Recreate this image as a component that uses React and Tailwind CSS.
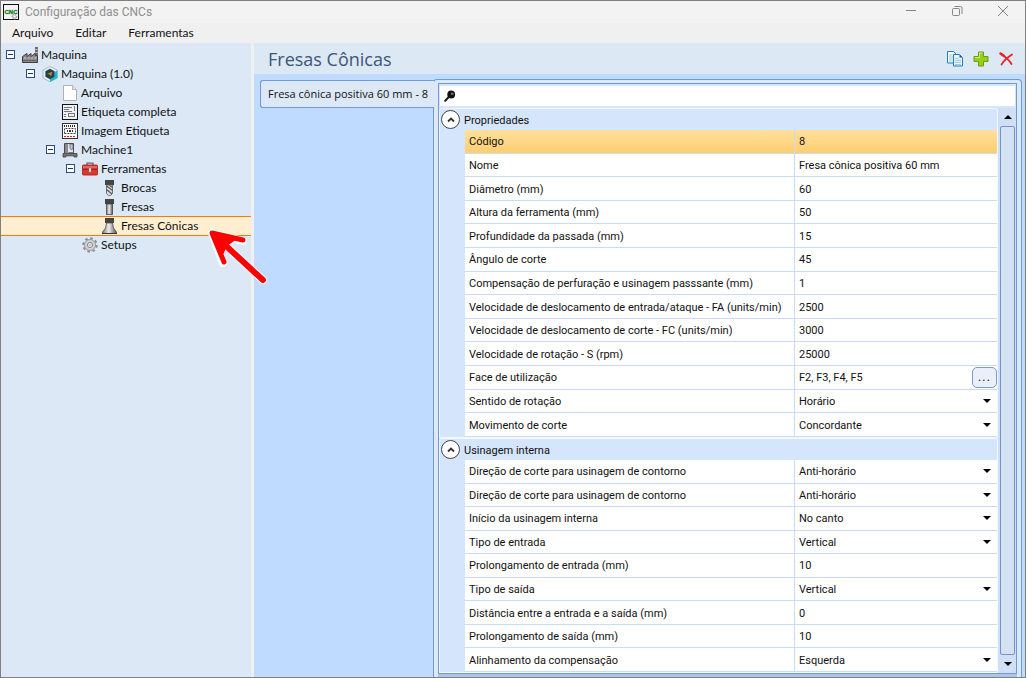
import { useState } from 'react';

const AppIcon = () => (
  <svg className="w-4 h-4 shrink-0" viewBox="0 0 16 16">
    <rect x=".5" y=".5" width="15" height="15" fill="#f4f4f4" stroke="#111" />
    <text x="8" y="10" textAnchor="middle" fontFamily="Liberation Sans" fontWeight="bold" fontSize="6" stroke="#157a1c" strokeWidth=".3" fill="#157a1c">CNC</text>
    <circle cx="11.5" cy="12.5" r="2" fill="none" stroke="#aaa" strokeWidth="1.8" strokeDasharray="1.2 .6" />
  </svg>
);

const FactoryIcon = () => (
  <svg className="w-4 h-4" viewBox="0 0 16 16">
    <path d="M13.500-.5h2v9h-2z" fill="#ccc" stroke="#666" strokeWidth=".6" />
    <path d="M13.500 1h2M13.500 4h2M13.500 7h2" stroke="#444" strokeWidth="1.300" />
    <path d="M.5 15.500V9.500L5 6.500v3l4-3v3l4-3 .5 2h2v7z" fill="#8b8b8b" stroke="#3c3c3c" />
    <path d="M2 11h2M5.500 11h2M9 11h2M12.500 11h2" stroke="#ccc" strokeWidth="1" />
    <path d="M1 13.500h14" stroke="#666" />
  </svg>
);

const CubeIcon = () => (
  <svg className="w-4 h-4" viewBox="0 0 16 16">
    <path d="M8 .5 15 4v8l-7 3.800L1 12V4z" fill="#e8eef2" stroke="#9fb0bb" strokeWidth=".8" />
    <path d="M15.500 4.500V12L8 16v-3l4.500-2.500V6z" fill="#1bbccb" />
    <path d="M8 2.800 12.600 5.300v5.400L8 13.300 3.400 10.700V5.300z" fill="#1c4450" />
    <path d="m5 7.800 5.500-2L9 10.500 8 8.800z" fill="#e07b2c" />
  </svg>
);

const FileIcon = () => (
  <svg className="w-4 h-4" viewBox="0 0 16 16">
    <path d="M1.500.5h9l4 4v11h-13z" fill="#fdfdfd" stroke="#b0b0b0" />
    <path d="M10.500.5v4h4" fill="#e4e4e4" stroke="#bbb" />
  </svg>
);

const LabelIcon = () => (
  <svg className="w-4 h-4" viewBox="0 0 16 16">
    <rect x=".5" y=".5" width="15" height="15" fill="#eef0f2" stroke="#111" />
    <path d="M2 3.500h8M2 5.500h5M2 7.500h8M2 10.500h2M2 12.500h2M12.500 2v5" stroke="#777" />
    <rect x="6.500" y="9.500" width="6" height="3" fill="none" stroke="#777" />
  </svg>
);

const ImageLabelIcon = () => (
  <svg className="w-4 h-4" viewBox="0 0 16 16">
    <rect x=".5" y=".5" width="15" height="15" fill="#fff" stroke="#333" />
    <path d="M2 3h12" stroke="#333" strokeWidth="2" strokeDasharray="1 1" />
    <path d="M2.500 10.500v-5h11v5z" fill="none" stroke="#444" strokeDasharray="2 1" />
    <path d="M5 8h1M7 8h2M10 8h1" stroke="#333" strokeWidth="2" />
    <path d="M2 13.500h12" stroke="#e01818" strokeDasharray="2 1" />
  </svg>
);

const MachineIcon = () => (
  <svg className="w-4 h-4" viewBox="0 0 16 16">
    <path d="M2.500 11V1.500h9v10" fill="none" stroke="#4a4a4a" />
    <path d="M3 2h3v9H3z" fill="#8a8a8a" />
    <path d="M8 2h3v4L9.500 8 8 6z" fill="#c9c9c9" stroke="#555" strokeWidth=".7" />
    <path d="M6.500 10.500h5" stroke="#777" />
    <path d="M1 11.500h14v3.500h-3v-1.200H4V15H1z" fill="#777" stroke="#3a3a3a" strokeWidth=".8" />
  </svg>
);

const ToolboxIcon = () => (
  <svg className="w-4 h-4" viewBox="0 0 16 16">
    <path d="M5 4.500V2.200h6v2.300" fill="none" stroke="#666" strokeWidth="1.300" />
    <rect x=".5" y="4" width="15" height="10" rx="1" fill="#d93a34" stroke="#a31713" strokeWidth=".8" />
    <path d="M1 5h14v2.500H1z" fill="#e8655d" />
    <path d="M1 8.200h14" stroke="#9d1512" />
    <rect x="7" y="7" width="2" height="4" fill="#eee" stroke="#888" strokeWidth=".4" />
  </svg>
);

const DrillIcon = () => (
  <svg className="w-4 h-4" viewBox="0 0 16 16">
    <path d="M3 0h9v5H3z" fill="#444" />
    <path d="M4.500 5h6v8.500l-2 2h-2l-2-2z" fill="#ddd" stroke="#555" strokeWidth=".8" />
    <path d="m4.500 6 6 4.500M4.500 9.500l5.500 4.500M7.500 5.500l3 2" stroke="#555" strokeWidth="1.200" />
  </svg>
);

const MillIcon = () => (
  <svg className="w-4 h-4" viewBox="0 0 16 16">
    <defs>
      <linearGradient id="steel">
        <stop offset="0" stopColor="#777" />
        <stop offset=".45" stopColor="#eee" />
        <stop offset="1" stopColor="#555" />
      </linearGradient>
    </defs>
    <path d="M3 0h9v5H3z" fill="#444" />
    <path d="M4.500 5h6v10.500h-6z" fill="url(#steel)" stroke="#444" strokeWidth=".8" />
  </svg>
);

const ConeIcon = () => (
  <svg className="w-4 h-4" viewBox="0 0 16 16">
    <path d="M3 0h9v5H3z" fill="#444" />
    <path d="M4.500 5h6l1 5 3 4v1.500H.5V14l3-4z" fill="url(#steel)" stroke="#444" strokeWidth=".7" />
    <path d="M0 15.500h15" stroke="#333" />
  </svg>
);

const GearIcon = () => (
  <svg className="w-4 h-4" viewBox="0 0 16 16">
    <circle cx="8" cy="8" r="6.700" fill="none" stroke="#8c8c8c" strokeWidth="2" strokeDasharray="2.600 2.662" />
    <circle cx="8" cy="8" r="5.500" fill="#d2d2d2" stroke="#8c8c8c" strokeWidth=".8" />
    <circle cx="8" cy="8" r="2.600" fill="#dce8f6" stroke="#8c8c8c" />
    <circle cx="8" cy="8" r="1" fill="#b8b8b8" />
  </svg>
);

const CopyIcon = () => (
  <svg className="w-4 h-4" viewBox="0 0 16 16">
    <path d="M.5.5h6l3 3v8.500h-9z" fill="#f4fbff" stroke="#1f7fb8" />
    <path d="M2 4h3.500M2 6h5M2 8h5M2 10h5" stroke="#9fcbe4" />
    <path d="M6.500 3.500h6l3 3v8.500h-9z" fill="#e2f3fb" stroke="#1f7fb8" />
    <path d="M12.500 3.500v3h3z" fill="#1a5d8a" />
    <path d="M8 7.500h3.500M8 9.500h6M8 11.500h6M8 13.500h6" stroke="#9fcbe4" />
  </svg>
);

const AddIcon = () => (
  <svg className="w-4 h-4" viewBox="0 0 16 16">
    <path d="M5.500 1h5v4.500H15v5h-4.500V15h-5v-4.500H1v-5h4.500z" fill="#93cf1c" stroke="#6a9b10" />
    <path d="M6.500 2h3M2 6.500h4.500V2" fill="none" stroke="#cdee7d" />
  </svg>
);

const DeleteIcon = () => (
  <svg className="w-4 h-4" viewBox="0 0 16 16">
    <path d="M2 3c4 2.500 8 6 10.500 10M13 3.500C9 6 5 9.500 2.500 13.500" fill="none" stroke="#ee2222" strokeWidth="1.800" strokeLinecap="round" />
    <path d="M1.500 2.500 5 5" stroke="#ee2222" strokeWidth="2.600" strokeLinecap="round" />
  </svg>
);

const SearchIcon = () => (
  <svg className="w-3 h-3 shrink-0" viewBox="0 0 12 12">
    <path d="m1.200 10.800 3.600-4" stroke="#111" strokeWidth="2" strokeLinecap="round" />
    <circle cx="7.200" cy="4.500" r="3.900" fill="#111" />
    <circle cx="8.200" cy="3.800" r="1.300" fill="#777" />
  </svg>
);

const Caret = ({ up }) => (
  <svg className="w-2 h-1 pointer-events-none" viewBox="0 0 8 4">
    <path d={up ? 'M0 4h8L4 0z' : 'M0 0h8L4 4z'} fill="#000" />
  </svg>
);

const tree = [
  { name: 'Maquina', level: 0, icon: FactoryIcon, open: true },
  { name: 'Maquina (1.0)', level: 1, icon: CubeIcon, open: true },
  { name: 'Arquivo', level: 2, icon: FileIcon },
  { name: 'Etiqueta completa', level: 2, icon: LabelIcon },
  { name: 'Imagem Etiqueta', level: 2, icon: ImageLabelIcon },
  { name: 'Machine1', level: 2, icon: MachineIcon, open: true },
  { name: 'Ferramentas', level: 3, icon: ToolboxIcon, open: true },
  { name: 'Brocas', level: 4, icon: DrillIcon },
  { name: 'Fresas', level: 4, icon: MillIcon },
  { name: 'Fresas Cônicas', level: 4, icon: ConeIcon },
  { name: 'Setups', level: 3, icon: GearIcon },
];

const indent = ['pl-[5px]', 'pl-[25px]', 'pl-[45px]', 'pl-[65px]', 'pl-[85px]'];

const properties = [
  { name: 'Código', value: '8' },
  { name: 'Nome', value: 'Fresa cônica positiva 60 mm' },
  { name: 'Diâmetro (mm)', value: '60' },
  { name: 'Altura da ferramenta (mm)', value: '50' },
  { name: 'Profundidade da passada (mm)', value: '15' },
  { name: 'Ângulo de corte', value: '45' },
  { name: 'Compensação de perfuração e usinagem passsante (mm)', value: '1' },
  { name: 'Velocidade de deslocamento de entrada/ataque - FA (units/min)', value: '2500' },
  { name: 'Velocidade de deslocamento de corte - FC (units/min)', value: '3000' },
  { name: 'Velocidade de rotação - S (rpm)', value: '25000' },
  { name: 'Face de utilização', value: 'F2, F3, F4, F5', type: 'dialog' },
  { name: 'Sentido de rotação', value: 'Horário', type: 'select' },
  { name: 'Movimento de corte', value: 'Concordante', type: 'select' },
];

const internal = [
  { name: 'Direção de corte para usinagem de contorno', value: 'Anti-horário', type: 'select' },
  { name: 'Direção de corte para usinagem de contorno', value: 'Anti-horário', type: 'select' },
  { name: 'Início da usinagem interna', value: 'No canto', type: 'select' },
  { name: 'Tipo de entrada', value: 'Vertical', type: 'select' },
  { name: 'Prolongamento de entrada (mm)', value: '10' },
  { name: 'Tipo de saída', value: 'Vertical', type: 'select' },
  { name: 'Distância entre a entrada e a saída (mm)', value: '0' },
  { name: 'Prolongamento de saída (mm)', value: '10' },
  { name: 'Alinhamento da compensação', value: 'Esquerda', type: 'select' },
];

const TitleBar = () => (
  <header className="h-[22px] shrink-0 flex items-center bg-[#f3f3f3] pl-0.5">
    <AppIcon />
    <h1 className="ml-1.5 flex-1 text-[12px] text-[#8f8f8f]">Configuração das CNCs</h1>
    <div className="flex self-start text-[#858585]">
      <button aria-label="Minimizar" className="w-11 h-5 flex items-center justify-center">
        <svg className="w-3 h-3" viewBox="0 0 12 12"><path d="M1 5.500h10" stroke="currentColor" /></svg>
      </button>
      <button aria-label="Restaurar" className="w-12 h-5 flex items-center justify-center">
        <svg className="w-3 h-3" viewBox="0 0 12 12" fill="none" stroke="currentColor">
          <rect x="1.500" y="3.500" width="7" height="7" rx="1" />
          <path d="M3.500 1.500h6a1.500 1.500 0 0 1 1.500 1.500v6" />
        </svg>
      </button>
      <button aria-label="Fechar" className="w-11 h-5 flex items-center justify-center">
        <svg className="w-3 h-3" viewBox="0 0 12 12"><path d="m1 1 10 10M11 1 1 11" stroke="currentColor" /></svg>
      </button>
    </div>
  </header>
);

const MenuBar = () => (
  <nav className="h-5 shrink-0 flex items-center gap-[22px] px-[11px] bg-[#f0f0f0] font-['Lato',sans-serif] text-[12px]">
    <button>Arquivo</button>
    <button>Editar</button>
    <button>Ferramentas</button>
  </nav>
);

const Tree = ({ selected, onSelect }) => (
  <aside className="relative w-[250px] shrink-0 pt-0.5 bg-[#dce8f6] font-['Lato',sans-serif] text-[12px]">
    <ul>
      {tree.map((item) => (
        <li
          key={item.name + item.level}
          className={`flex items-center whitespace-nowrap ${indent[item.level]} ${
            item.name === selected ? 'h-5 -mb-px border-y border-[#f57c00] bg-[#ffefd0]' : 'h-[19px]'
          }`}
        >
          <span className="w-[9px] mr-[7px] shrink-0">
            {item.open && (
              <button aria-label={`Recolher ${item.name}`} className="flex size-[9px] items-center justify-center border border-[#2b4a7d] bg-white">
                <span className="w-[5px] h-px bg-[#1d3360]" />
              </button>
            )}
          </span>
          <button className="flex items-center gap-[3px]" onClick={() => onSelect(item.name)}>
            <item.icon />
            {item.name}
          </button>
        </li>
      ))}
    </ul>
    {/* Pointer to the selected item */}
    <svg className="absolute z-20 left-[206px] top-[184px] w-[64px] h-[60px] pointer-events-none" viewBox="0 0 64 60" fill="none" strokeLinecap="round" strokeLinejoin="round">
      <path d="M56 53 20 20M5 6l31 8M5 6l11 30" stroke="#fff" strokeWidth="8" />
      <path d="M18 18 56 53" stroke="#f00" strokeWidth="6" />
      <path d="M36 13 5 6l12 29" stroke="#f00" strokeWidth="5" />
      <path d="M5 6 30 12 20 19 15 30z" fill="#f00" />
    </svg>
  </aside>
);

const PropertyRow = ({ id, item, active }) => (
  <tr className={active ? 'bg-linear-to-b from-[#ffe09c] to-[#ffcd6e]' : 'bg-white'}>
    <th scope="row" className="w-[329px] p-0 pt-0.5 pl-1 text-left font-normal border-b border-[#c9dcf5] whitespace-nowrap">
      <label htmlFor={id}>{item.name}</label>
    </th>
    <td className="p-0 border-b border-l border-[#c9dcf5]">
      <div className="relative flex items-center h-[21px]">
        {item.type === 'select' ? (
          <>
            <select id={id} defaultValue={item.value} className="w-full pt-0.5 pl-1 pr-4 appearance-none bg-transparent outline-none">
              <option>{item.value}</option>
            </select>
            <span className="absolute right-1.5 inset-y-0 flex items-center pointer-events-none">
              <Caret />
            </span>
          </>
        ) : (
          <input id={id} defaultValue={item.value} className="w-full min-w-0 pt-0.5 pl-1 bg-transparent outline-none" />
        )}
        {item.type === 'dialog' && (
          <button aria-label={`Editar ${item.name}`} className="w-[25px] h-[21px] shrink-0 rounded-[5px] border border-[#7a9acb] bg-[#e9f0fa] text-[12px] leading-4 tracking-widest">
            ...
          </button>
        )}
      </div>
    </td>
  </tr>
);

const PropertyGroup = ({ title, prefix, items, tableClass, active }) => (
  <section className="pl-[25px] border border-[#f4f8fe] rounded-t-[3px] bg-[#d5e5fb]">
    <h3 className="h-[21px] -ml-6 flex items-center gap-1">
      <button aria-label={`Recolher ${title}`} className="relative flex size-[19px] shrink-0 items-center justify-center rounded-full border border-[#444] bg-white">
        <svg className="w-2 h-2" viewBox="0 0 8 8"><path d="M1 5.500 4 2.500l3 3" fill="none" stroke="#333" strokeWidth="1.800" /></svg>
      </button>
      <span className="pt-0.5">{title}</span>
    </h3>
    <table className={`w-full table-fixed border-separate border-spacing-0 ${tableClass}`}>
      <tbody>
        {items.map((item, i) => (
          <PropertyRow key={i} id={`${prefix}-${i}`} item={item} active={active === i} />
        ))}
      </tbody>
    </table>
  </section>
);

const PropertyGrid = () => (
  <div className="flex-1 min-w-0 mt-[5px] mr-[3px] flex flex-col border border-[#6e9ad8] border-b-0 rounded-t-[4px] bg-[#dce8f6] px-1 pt-[3px]">
    <div className="flex-1 flex flex-col border border-[#6e9ad8] bg-[#d5e5fb]">
      <label className="m-0.5 mx-px h-5 flex items-center gap-1 bg-white px-1">
        <SearchIcon />
        <input aria-label="Pesquisar" className="flex-1 min-w-0 bg-transparent outline-none" />
      </label>
      <div className="flex-1 flex">
        <div className="flex-1 min-w-0">
          <PropertyGroup title="Propriedades" prefix="prop" items={properties} tableClass="h-[307px]" active={0} />
          <PropertyGroup title="Usinagem interna" prefix="int" items={internal} tableClass="h-[212px]" />
        </div>
        <div className="w-[18px] shrink-0 flex flex-col pl-0.5 pr-px bg-[#cfdff5]">
          <button aria-label="Rolar para cima" className="h-[18px] flex items-center justify-center"><Caret up /></button>
          <div className="flex-1 rounded-[2px] border border-[#7593c9] bg-[#d3e1f3]" />
          <button aria-label="Rolar para baixo" className="h-[18px] flex items-center justify-center"><Caret /></button>
        </div>
      </div>
    </div>
    <div className="h-[3px] bg-[#adc6e8]" />
  </div>
);

const App = () => {
  const [selected, setSelected] = useState('Fresas Cônicas');

  return (
    <div className="h-screen flex flex-col overflow-hidden border border-[#808080] bg-[#f0f0f0] font-['Roboto',sans-serif] text-[11px] leading-4 text-[#111]">
      <TitleBar />
      <MenuBar />
      <div className="flex-1 min-h-0 flex gap-[3px]">
        <Tree selected={selected} onSelect={setSelected} />
        <main className="flex-1 min-w-0 flex flex-col bg-[#bfdbff]">
          <div className="h-[31px] shrink-0 flex items-center pl-3.5 pr-[10px] bg-[#dde8f5]">
            <h2 className="flex-1 font-['Open_Sans',sans-serif] text-[18px] leading-6 text-[#3b5775]">Fresas Cônicas</h2>
            <div className="flex gap-[10px]">
              <button aria-label="Copiar"><CopyIcon /></button>
              <button aria-label="Adicionar"><AddIcon /></button>
              <button aria-label="Excluir"><DeleteIcon /></button>
            </div>
          </div>
          <div className="flex-1 min-h-0 flex">
            <div className="w-[179px] shrink-0 pl-1.5 pt-1.5">
              <button className="relative z-10 h-7 w-[174px] rounded-l-[3px] border border-r-0 border-[#6e9ad8] bg-[#dce8f6] pl-[7px] font-['Open_Sans',sans-serif] text-left whitespace-nowrap">
                Fresa cônica positiva 60 mm - 8
              </button>
            </div>
            <PropertyGrid />
          </div>
        </main>
      </div>
    </div>
  );
};

export default App;
